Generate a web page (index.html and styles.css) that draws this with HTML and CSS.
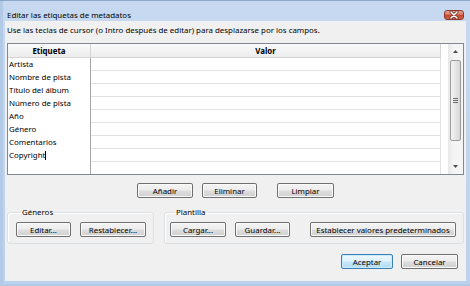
FILE: index.html
```html
<!DOCTYPE html>
<html lang="es">
<head>
  <meta charset="UTF-8">
  <meta name="viewport" content="width=device-width, initial-scale=1.0">
  <title>Editar las etiquetas de metadatos</title>
  <link rel="stylesheet" href="styles.css">
</head>
<body>
  <div class="ventana">
    <div class="barra-titulo">
      <span class="titulo">Editar las etiquetas de metadatos</span>
      <span class="cerrar">
        <svg width="10" height="8" viewBox="0 0 10 8">
          <path d="M2 1 L8 7 M8 1 L2 7" stroke="#6b2418" stroke-width="3" stroke-linecap="round"/>
          <path d="M2 1 L8 7 M8 1 L2 7" stroke="#fff" stroke-width="1.6" stroke-linecap="round"/>
        </svg>
      </span>
    </div>

    <div class="cliente">
      <p class="ayuda">Use las teclas de cursor (o Intro después de editar) para desplazarse por los campos.</p>

      <div class="tabla-marco">
        <div class="tabla-area">
          <table class="tabla-etiquetas">
            <thead>
              <tr>
                <th class="col-etiqueta">Etiqueta</th>
                <th class="col-valor">Valor</th>
              </tr>
            </thead>
            <tbody>
              <tr><td class="etiqueta">Artista</td><td class="valor"></td></tr>
              <tr><td class="etiqueta">Nombre de pista</td><td class="valor"></td></tr>
              <tr><td class="etiqueta">Título del álbum</td><td class="valor"></td></tr>
              <tr><td class="etiqueta">Número de pista</td><td class="valor"></td></tr>
              <tr><td class="etiqueta">Año</td><td class="valor"></td></tr>
              <tr><td class="etiqueta">Género</td><td class="valor"></td></tr>
              <tr><td class="etiqueta">Comentarios</td><td class="valor"></td></tr>
              <tr><td class="etiqueta">Copyright<span class="cursor"></span></td><td class="valor"></td></tr>
              <tr class="relleno"><td class="etiqueta"></td><td class="valor"></td></tr>
            </tbody>
          </table>
        </div>
        <div class="scroll">
          <div class="flecha">
            <svg width="5" height="3" viewBox="0 0 5 3"><path d="M0 3 L2.5 0 L5 3 Z" fill="#4d4d4d"/></svg>
          </div>
          <div class="pista">
            <div class="thumb">
              <span class="grip"></span>
              <span class="grip"></span>
              <span class="grip"></span>
            </div>
          </div>
          <div class="flecha">
            <svg width="5" height="3" viewBox="0 0 5 3"><path d="M0 0 L5 0 L2.5 3 Z" fill="#4d4d4d"/></svg>
          </div>
        </div>
      </div>

      <div class="botones-tabla">
        <button class="boton b-anadir">Añadir</button>
        <button class="boton b-eliminar">Eliminar</button>
        <button class="boton b-limpiar">Limpiar</button>
      </div>

      <div class="grupos">
        <fieldset class="grupo generos">
          <legend>Géneros</legend>
          <button class="boton b-editar">Editar...</button>
          <button class="boton b-restablecer">Restablecer...</button>
        </fieldset>
        <fieldset class="grupo plantilla">
          <legend>Plantilla</legend>
          <button class="boton b-cargar">Cargar...</button>
          <button class="boton b-guardar">Guardar...</button>
          <button class="boton b-establecer">Establecer valores predeterminados</button>
        </fieldset>
      </div>

      <div class="pie">
        <button class="boton boton-defecto b-aceptar">Aceptar</button>
        <button class="boton b-cancelar">Cancelar</button>
      </div>
    </div>
  </div>
</body>
</html>
```

FILE: styles.css
```css
/* Dialogo estilo Windows 7 */
body {
  margin: 0;
  font-family: "Noto Sans", "Open Sans", sans-serif;
  font-size: 7.9px;
  color: #000;
}
.ventana {
  width: 470px;
  height: 286px;
  box-sizing: border-box;
  display: flex;
  flex-direction: column;
  background: linear-gradient(#c6d9f0, #bcd2ec);
  border-top: 1px solid #8ea7c4;
  box-shadow: inset 3px 0 0 #b3cae6, inset 0 -2px 0 #b3cae6;
}
.barra-titulo {
  height: 20px;
  display: flex;
  align-items: flex-end;
  justify-content: space-between;
  padding: 0 6px 1px 7px;
  box-sizing: border-box;
}
.titulo {
  line-height: 10px;
}
.cerrar {
  width: 20px;
  height: 10px;
  box-sizing: border-box;
  border: 1px solid #8d3a2c;
  border-radius: 3px;
  background: linear-gradient(#e9a99a, #d2725e 45%, #c7452f 55%, #d0644c);
  display: flex;
  align-items: center;
  justify-content: center;
}
.cerrar svg {
  display: block;
}

/* Area de cliente */
.cliente {
  flex: 1;
  margin: 0 4px 5px 5px;
  padding: 4px 2px 0 2px;
  background: #f0f0f0;
  display: flex;
  flex-direction: column;
}
.ayuda {
  margin: 0;
  line-height: 10px;
}

/* Tabla de etiquetas */
.tabla-marco {
  margin-top: 8px;
  height: 132px;
  box-sizing: border-box;
  border: 1px solid #828790;
  background: #fff;
  display: flex;
}
.tabla-area {
  flex: 1;
}
.tabla-etiquetas {
  width: 433px;
  height: 100%;
  border-collapse: collapse;
  table-layout: fixed;
}
.tabla-etiquetas th {
  height: 13px;
  padding: 0;
  font-weight: bold;
  text-align: center;
  line-height: 12px;
  background: linear-gradient(#f9f9f9, #ececec);
  border-bottom: 1px solid #d5d5d5;
  border-right: 1px solid #d5d5d5;
}
.col-etiqueta {
  width: 82px;
}
.tabla-etiquetas td {
  height: 12px;
  padding: 0 0 0 1px;
  line-height: 12px;
  white-space: nowrap;
}
.etiqueta {
  border-right: 1px solid #a6a6a6;
}
.valor {
  border-bottom: 1px solid #e2e2e2;
  border-right: 1px solid #e2e2e2;
}
.relleno td {
  height: auto;
  border-bottom: none;
}
.cursor {
  display: inline-block;
  width: 1px;
  height: 9px;
  background: #000;
  vertical-align: -2px;
}

/* Barra de desplazamiento */
.scroll {
  width: 15px;
  display: flex;
  flex-direction: column;
  background: linear-gradient(90deg, #e8e8e8, #f5f5f5 40%, #f5f5f5);
}
.flecha {
  height: 15px;
  display: flex;
  align-items: center;
  justify-content: center;
}
.pista {
  flex: 1;
  padding: 1px 2px 0 2px;
}
.thumb {
  height: 81px;
  box-sizing: border-box;
  border: 1px solid #9c9c9c;
  border-radius: 2px;
  background: linear-gradient(90deg, #f3f3f3, #e6e6e6 50%, #d6d6d6);
  display: flex;
  flex-direction: column;
  align-items: center;
  justify-content: center;
  gap: 1px;
}
.grip {
  width: 5px;
  height: 1px;
  background: #6d6d6d;
}

/* Botones */
.boton {
  height: 15px;
  box-sizing: border-box;
  padding: 0;
  font-family: inherit;
  font-size: inherit;
  line-height: 12px;
  color: #000;
  border: 1px solid #707070;
  border-radius: 2px;
  background: linear-gradient(#f4f4f4, #ececec 48%, #dedede 52%, #d0d0d0);
  box-shadow: inset 0 0 0 1px #fbfbfb;
}
.boton-defecto {
  border-color: #3c7fb1;
  background: linear-gradient(#eef7fd, #dff1fc 48%, #c6e7fa 52%, #b2ddf4);
  box-shadow: inset 0 0 0 1px #c8ecfd;
}
.botones-tabla {
  margin-top: 8px;
  display: flex;
  justify-content: center;
  gap: 9px;
}
.b-anadir { width: 56px; }
.b-eliminar { width: 55px; }
.b-limpiar { width: 57px; margin-left: 11px; }

/* Grupos */
.grupos {
  margin-top: 9px;
  display: flex;
  gap: 10px;
}
.grupo {
  margin: 0;
  padding: 5px 7px 6px 8px;
  border: 1px solid #dadfe3;
  border-radius: 3px;
  box-shadow: inset 1px 1px 0 #fff;
  display: flex;
  gap: 9px;
}
.grupo legend {
  padding: 0 1px;
  margin-left: 5px;
  line-height: 10px;
}
.generos {
  width: 147px;
  box-sizing: border-box;
}
.plantilla {
  flex: 1;
  padding-left: 5px;
  padding-right: 6px;
}
.b-editar { width: 55px; }
.b-restablecer { width: 66px; }
.b-cargar { width: 56px; }
.b-guardar { width: 55px; }
.b-establecer { width: 146px; margin-left: 11px; }

/* Pie */
.pie {
  margin-top: 10px;
  display: flex;
  justify-content: flex-end;
  gap: 8px;
  padding-right: 6px;
}
.b-aceptar { width: 52px; }
.b-cancelar { width: 57px; }
```
